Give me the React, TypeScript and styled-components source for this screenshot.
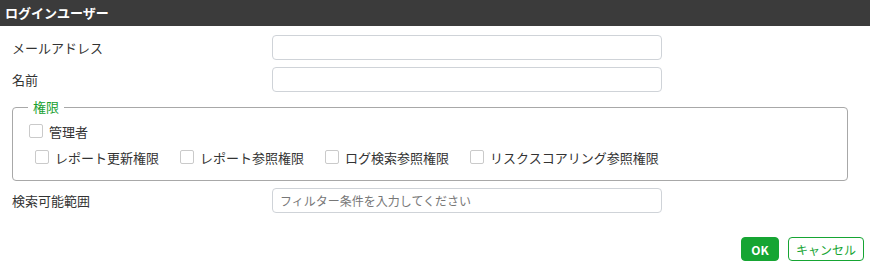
import React from "react";
import styled, { createGlobalStyle } from "styled-components";

const Global = createGlobalStyle`
  html, body { margin: 0; padding: 0; background: #fff; }
  body { font-family: "Noto Sans CJK JP", "Noto Sans", sans-serif; font-size: 13px; color: #333; }
  * { box-sizing: border-box; }
`;

const Header = styled.div`
  height: 26px;
  background: #3b3b3b;
  color: #fff;
  font-weight: bold;
  font-size: 13px;
  line-height: 26px;
  padding-left: 5px;
`;

const Body = styled.div`
  padding: 9px 22px 0 12px;
  display: flex;
  flex-direction: column;
`;

const Row = styled.div<{ $mt?: number }>`
  display: flex;
  align-items: center;
  height: 25px;
  margin-top: ${(p) => p.$mt ?? 0}px;
`;

const Label = styled.div`
  width: 260px;
  flex: none;
`;

const Input = styled.input`
  width: 390px;
  height: 25px;
  border: 1px solid #cfd3d8;
  border-radius: 4px;
  padding: 0 7px;
  font-family: inherit;
  font-size: 12px;
  color: #333;
  outline: none;
  &::placeholder { color: #777; }
`;

const Fieldset = styled.fieldset`
  margin: 7px 0 0 0;
  padding: 0 16px 13px 16px;
  border: 1px solid #a8a8a8;
  border-radius: 4px;
  min-width: 0;
`;

const Legend = styled.legend`
  margin-left: -1px;
  padding: 0 5px;
  color: #18a030;
  font-size: 13px;
  line-height: 16px;
`;

const CheckRow = styled.div<{ $indent?: number; $mt?: number }>`
  display: flex;
  align-items: center;
  gap: 21px;
  height: 20px;
  padding-left: ${(p) => p.$indent ?? 0}px;
  margin-top: ${(p) => p.$mt ?? 0}px;
`;

const CheckItem = styled.label`
  display: flex;
  align-items: center;
  gap: 6px;
`;

const Box = styled.span`
  width: 14px;
  height: 14px;
  border: 1px solid #cacaca;
  border-radius: 2px;
  background: #fff;
  flex: none;
`;

const Footer = styled.div`
  display: flex;
  justify-content: flex-end;
  gap: 9px;
  margin-top: 24px;
  margin-right: -16px;
`;

const Button = styled.button<{ $primary?: boolean }>`
  height: 24px;
  width: ${(p) => (p.$primary ? 38 : 76)}px;
  padding: 0;
  border-radius: 4px;
  font-family: inherit;
  font-size: 12px;
  font-weight: ${(p) => (p.$primary ? "bold" : "normal")};
  border: 1px solid #16a533;
  background: ${(p) => (p.$primary ? "#16a533" : "#fff")};
  color: ${(p) => (p.$primary ? "#fff" : "#16a533")};
`;

const Check = ({ children }: { children: React.ReactNode }) => (
  <CheckItem>
    <Box />
    <span>{children}</span>
  </CheckItem>
);

export default function App() {
  return (
    <>
      <Global />
      <Header>ログインユーザー</Header>
      <Body>
        <Row>
          <Label>メールアドレス</Label>
          <Input />
        </Row>
        <Row $mt={7}>
          <Label>名前</Label>
          <Input />
        </Row>
        <Fieldset>
          <Legend>権限</Legend>
          <CheckRow $mt={6}>
            <Check>管理者</Check>
          </CheckRow>
          <CheckRow $indent={6} $mt={6}>
            <Check>レポート更新権限</Check>
            <Check>レポート参照権限</Check>
            <Check>ログ検索参照権限</Check>
            <Check>リスクスコアリング参照権限</Check>
          </CheckRow>
        </Fieldset>
        <Row $mt={7}>
          <Label>検索可能範囲</Label>
          <Input placeholder="フィルター条件を入力してください" />
        </Row>
        <Footer>
          <Button $primary>OK</Button>
          <Button>キャンセル</Button>
        </Footer>
      </Body>
    </>
  );
}
